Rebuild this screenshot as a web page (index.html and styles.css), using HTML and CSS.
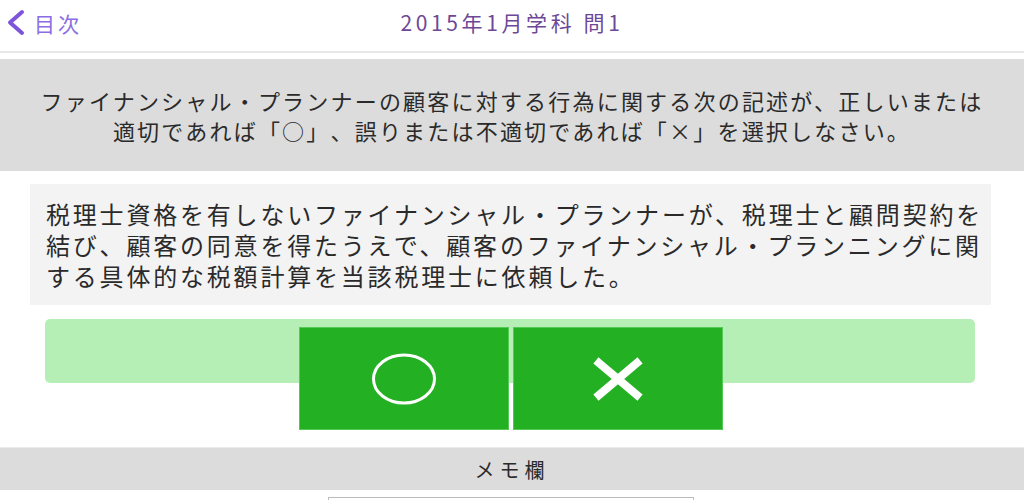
FILE: index.html
```html
<!DOCTYPE html>
<html lang="ja">
  <head>
    <meta charset="UTF-8" />
    <meta name="viewport" content="width=device-width, initial-scale=1.0" />
    <title>2015年1月学科 問1</title>
    <link rel="stylesheet" href="styles.css">
  </head>
  <body>
    <header class="topbar">
      <a class="back" href="#">
        <svg class="back-icon" width="22" height="28" viewBox="0 0 22 28">
          <polyline points="17,3 5,13.5 17,24" fill="none" stroke="#7d55dc" stroke-width="4" stroke-linecap="round" stroke-linejoin="round" />
        </svg>
        <span>目次</span>
      </a>
      <h1 class="title">2015年1月学科 問1</h1>
    </header>
    <div class="instruction">
      ファイナンシャル・プランナーの顧客に対する行為に関する次の記述が、正しいまたは<br>
      適切であれば「○」、誤りまたは不適切であれば「×」を選択しなさい。
    </div>
    <div class="question">
      税理士資格を有しないファイナンシャル・プランナーが、税理士と顧問契約を結び、顧客の同意を得たうえで、顧客のファイナンシャル・プランニングに関する具体的な税額計算を当該税理士に依頼した。
    </div>
    <div class="result"></div>
    <div class="answers">
      <button class="answer" type="button" aria-label="○">
        <svg width="70" height="56" viewBox="0 0 70 56">
          <ellipse cx="35" cy="28" rx="30.5" ry="24" fill="none" stroke="#fff" stroke-width="3" />
        </svg>
      </button>
      <button class="answer" type="button" aria-label="×">
        <svg width="56" height="46" viewBox="0 0 56 46">
          <line x1="9" y1="7" x2="47" y2="39" stroke="#fff" stroke-width="8" stroke-linecap="square" />
          <line x1="47" y1="7" x2="9" y2="39" stroke="#fff" stroke-width="8" stroke-linecap="square" />
        </svg>
      </button>
    </div>
    <div class="memo-head">メモ欄</div>
    <div class="memo-body">
      <textarea class="memo"></textarea>
    </div>
  </body>
</html>
```

FILE: styles.css
```css
html,
body {
  margin: 0;
  padding: 0;
  background: #fff;
  font-family: 'Noto Sans CJK JP', 'Noto Sans', sans-serif;
  color: #222;
}
body {
  height: 500px;
  overflow: hidden;
}
.topbar {
  position: relative;
  height: 51px;
  border-bottom: 2px solid #e8e8e8;
  margin-bottom: 6px;
  display: flex;
  align-items: center;
  justify-content: center;
}
.back {
  position: absolute;
  left: 5px;
  top: 8px;
  display: flex;
  align-items: center;
  gap: 7px;
  color: #8a6ee4;
  text-decoration: none;
  font-size: 21px;
  letter-spacing: 3px;
}
.back-icon {
  display: block;
}
.title {
  margin: 0;
  font-size: 21px;
  font-weight: normal;
  letter-spacing: 3.6px;
  color: #6e4896;
  margin-top: -8px;
}
.instruction,
.question {
  text-spacing-trim: space-all;
}
.instruction {
  background: #dcdcdc;
  padding: 26px 0;
  text-align: center;
  font-size: 22px;
  letter-spacing: 2.2px;
  line-height: 30px;
  color: #2a2a2a;
}
.question {
  margin: 13px 33px 0 30px;
  background: #f3f3f3;
  padding: 14px 3px 14px 16px;
  font-size: 24px;
  letter-spacing: 2.8px;
  line-height: 31px;
  color: #2a2a2a;
}
.result {
  margin: 14px 49px 0 45px;
  height: 64px;
  background: #b6efb6;
  border-radius: 5px;
}
.answers {
  display: flex;
  justify-content: center;
  gap: 4px;
  margin: -56px 0 0 -2px;
}
.answer {
  width: 210px;
  height: 103px;
  margin: 0;
  padding: 0;
  background: #23b023;
  border: 1px solid #55c955;
  display: flex;
  align-items: center;
  justify-content: center;
  cursor: pointer;
}
.answer svg {
  display: block;
}
.memo-head {
  margin-top: 17px;
  height: 42px;
  background: #dcdcdc;
  border-top: 1px solid #ebebeb;
  display: flex;
  align-items: center;
  justify-content: center;
  font-size: 20px;
  letter-spacing: 5px;
  color: #2a2a2a;
}
.memo-body {
  display: flex;
  justify-content: center;
  padding-top: 7px;
}
.memo {
  width: 360px;
  height: 120px;
  margin-left: -2px;
  border: 1px solid #bbb;
  resize: none;
}
```
